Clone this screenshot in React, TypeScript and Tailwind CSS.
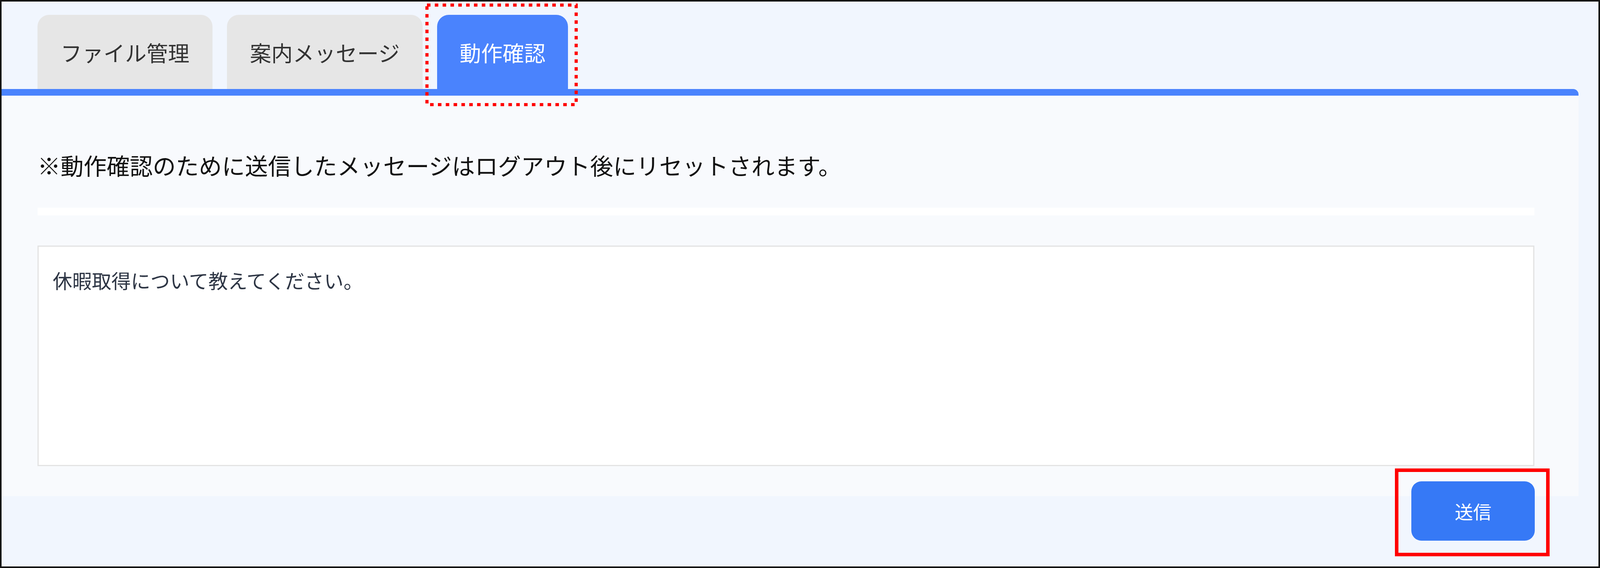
import React from "react";

function DottedMark() {
  return (
    <div className="pointer-events-none absolute -left-[30px] -right-[25px] -top-[29px] -bottom-[44px]">
      <svg className="h-full w-full" viewBox="0 0 389 263" preserveAspectRatio="none">
        <rect x="4" y="4" width="381" height="255" fill="none" stroke="#ff0000" strokeWidth="8" strokeDasharray="9 11" />
      </svg>
    </div>
  );
}

export default function App() {
  return (
    <div className="flex h-screen w-full flex-col border-[4px] border-[#151515] bg-[#f1f6fe] font-['Noto_Sans_CJK_JP','Noto_Sans',sans-serif]">
      {/* Tabs */}
      <div className="relative z-10 mt-[34px] ml-[92px] flex gap-[37px]">
        <div className="flex h-[190px] w-[448px] items-center justify-center rounded-t-[30px] bg-[#e6e6e6] text-[55px] text-[#333333]">
          ファイル管理
        </div>
        <div className="flex h-[190px] w-[501px] items-center justify-center rounded-t-[30px] bg-[#e6e6e6] text-[55px] text-[#333333]">
          案内メッセージ
        </div>
        <div className="relative flex h-[190px] w-[335px] items-center justify-center rounded-t-[30px] bg-[#4a83fd] text-[55px] text-white">
          動作確認
          <DottedMark />
        </div>
      </div>

      {/* Panel */}
      <div className="mr-[51px] rounded-tr-[14px] border-t-[17px] border-[#4a83fd] bg-[#f8fafd] pl-[92px] pr-[113px] pt-[148px] pb-[77px]">
        <p className="text-[59px] leading-[60px] text-[#111111]">
          ※動作確認のために送信したメッセージはログアウト後にリセットされます。
        </p>
        <div className="mt-[79px] h-[20px] bg-white" />
        <div className="mt-[77px] h-[565px] border-[3px] border-[#e3e3e3] bg-white pl-[36px] pt-[60px]">
          <p className="text-[50px] leading-[51px] text-[#2e3645]">休暇取得について教えてください。</p>
        </div>
      </div>

      {/* Send button with red highlight */}
      <div className="relative z-10 -mt-[71px] mr-[125px] flex justify-end">
        <div className="border-[9px] border-[#ff0000] pl-[33px] pr-[29px] pt-[24px] pb-[31px]">
          <button className="flex h-[152px] w-[316px] items-center justify-center rounded-[26px] bg-[#3679f6] text-[47px] text-white">
            送信
          </button>
        </div>
      </div>
    </div>
  );
}
